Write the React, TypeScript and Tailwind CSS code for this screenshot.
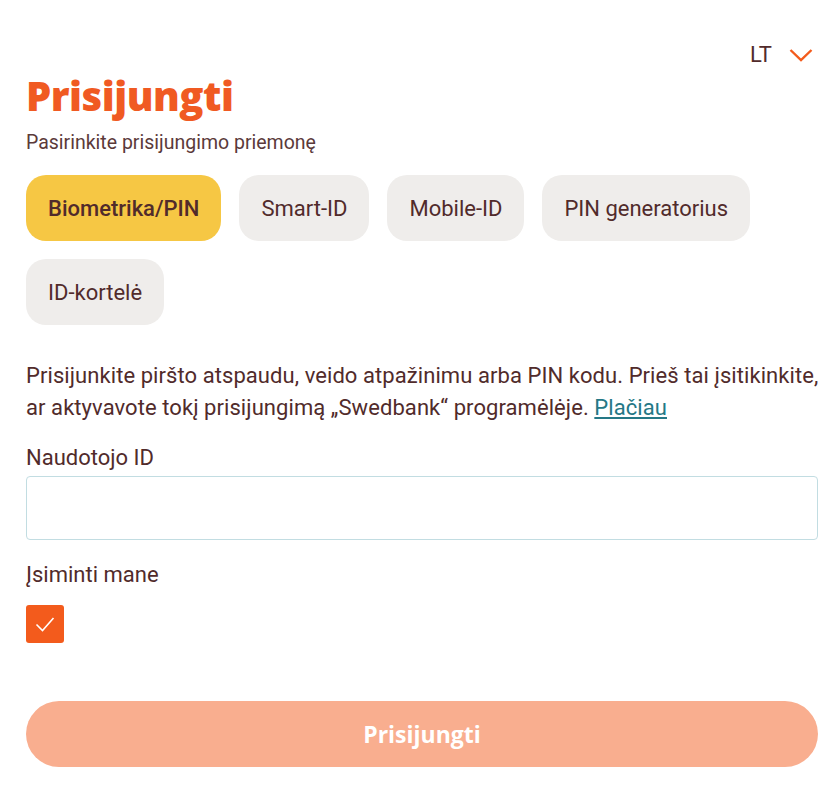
import { useState } from "react";

const methods = ["Biometrika/PIN", "Smart-ID", "Mobile-ID", "PIN generatorius", "ID-kortelė"];

export default function App() {
  const [active, setActive] = useState(0);
  const [remember, setRemember] = useState(true);

  return (
    <div className="min-h-[795px] w-[837px] bg-white text-[#512b2b] font-['Roboto',sans-serif]">
      <div className="w-[818px] pl-[26px] pt-[42px]">
        <div className="flex justify-end items-center gap-[17px] pr-[5px] h-[26px]">
          <span className="text-[22px] leading-none">LT</span>
          <svg width="24" height="14" viewBox="0 0 24 14" fill="none">
            <path d="M1.5 2l10.5 10 10.5-10" stroke="#f35b1c" strokeWidth="2.4" />
          </svg>
        </div>

        <h1 className="mt-[4px] text-[40px] leading-[48px] font-extrabold text-[#f05a22] font-['Open_Sans',sans-serif] tracking-[-0.5px]">
          Prisijungti
        </h1>
        <p className="mt-[11px] text-[19.5px] leading-[24px] text-[#5b3a3a]">
          Pasirinkite prisijungimo priemonę
        </p>

        <div className="mt-[20px] flex flex-wrap gap-[18px] w-[792px]">
          {methods.map((m, i) => (
            <button
              key={m}
              onClick={() => setActive(i)}
              className={
                i === active
                  ? "h-[66px] px-[22px] rounded-[20px] bg-[#f6c744] text-[22px] font-medium text-[#512b2b]"
                  : "h-[66px] px-[22px] rounded-[20px] bg-[#efedeb] text-[22px] text-[#512b2b]"
              }
            >
              {m}
            </button>
          ))}
        </div>

        <p className="mt-[35px] w-[802px] text-[22px] leading-[32px] tracking-[0.07px]">
          Prisijunkite piršto atspaudu, veido atpažinimu arba PIN kodu. Prieš tai įsitikinkite, ar aktyvavote tokį
          prisijungimą „Swedbank“ programėlėje.{" "}
          <a href="#" className="text-[#257886] underline underline-offset-2">
            Plačiau
          </a>
        </p>

        <label className="block mt-[18px] text-[22px] leading-[32px]">Naudotojo ID</label>
        <input
          type="text"
          className="mt-[2px] block w-[792px] h-[64px] rounded-[4px] border border-[#c2dde2] px-4 text-[20px] outline-none"
        />

        <div className="mt-[19px] text-[22px] leading-[32px]">Įsiminti mane</div>
        <button
          onClick={() => setRemember(!remember)}
          className={
            remember
              ? "mt-[14px] w-[38px] h-[38px] rounded-[3px] bg-[#f35b1c] flex items-center justify-center"
              : "mt-[14px] w-[38px] h-[38px] rounded-[3px] border-2 border-[#b5a8a8] bg-white flex items-center justify-center"
          }
        >
          {remember && (
            <svg width="22" height="18" viewBox="0 0 22 18" fill="none">
              <path d="M2.5 9.5l6 6L19.5 3" stroke="white" strokeWidth="1.6" />
            </svg>
          )}
        </button>

        <button className="mt-[58px] w-[792px] h-[66px] rounded-full bg-[#f9ae8f] text-white text-[23px] font-bold font-['Open_Sans',sans-serif]">
          Prisijungti
        </button>
      </div>
    </div>
  );
}
